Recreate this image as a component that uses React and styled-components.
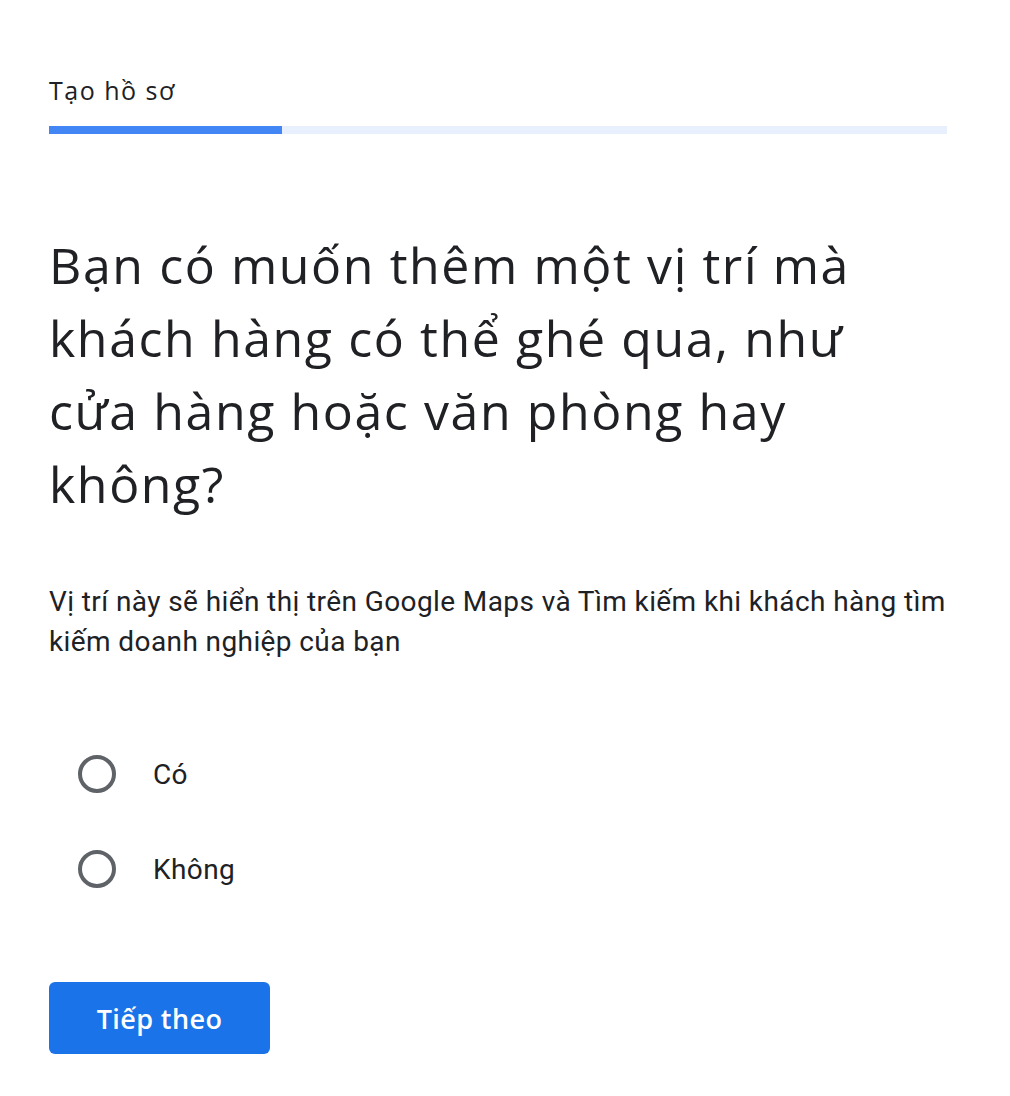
import React, { useState } from 'react';
import styled, { createGlobalStyle } from 'styled-components';

const GlobalStyle = createGlobalStyle`
  html, body {
    margin: 0;
    padding: 0;
    background: #fff;
  }
`;

const Page = styled.div`
  padding: 74px 63px 40px 49px;
  font-family: 'Open Sans', Roboto, sans-serif;
  color: #202124;
`;

const StepTitle = styled.div`
  font-size: 25px;
  line-height: 32px;
  font-weight: 500;
  letter-spacing: 1.5px;
`;

const Track = styled.div`
  margin-top: 20px;
  width: 898px;
  height: 8px;
  background: #e8f0fe;
  display: flex;
`;

const Fill = styled.div`
  height: 100%;
  background: #4285f4;
`;

const Heading = styled.h1`
  margin: 95px 0 0;
  max-width: 870px;
  font-size: 50px;
  line-height: 73px;
  font-weight: 400;
  letter-spacing: 1.6px;
`;

const Description = styled.p`
  margin: 61px 0 0;
  font-family: Roboto, 'Liberation Sans', sans-serif;
  font-size: 28px;
  line-height: 40px;
  letter-spacing: 0.4px;
`;

const Options = styled.div`
  margin-top: 76px;
  display: flex;
  flex-direction: column;
  gap: 23px;
`;

const Option = styled.label`
  display: flex;
  align-items: center;
  height: 72px;
  padding-left: 29px;
  gap: 37px;
  cursor: pointer;
  font-family: Roboto, 'Liberation Sans', sans-serif;
  font-size: 28px;
  letter-spacing: 0.4px;
`;

const Radio = styled.span`
  box-sizing: border-box;
  width: 38px;
  height: 38px;
  border-radius: 50%;
  border: 4px solid ${(p) => (p.checked ? '#1a73e8' : '#5f6368')};
  display: flex;
  align-items: center;
  justify-content: center;
  &::after {
    content: '';
    width: 18px;
    height: 18px;
    border-radius: 50%;
    background: #1a73e8;
    display: ${(p) => (p.checked ? 'block' : 'none')};
  }
`;

const NextButton = styled.button`
  margin-top: 77px;
  width: 221px;
  height: 72px;
  border: none;
  border-radius: 6px;
  background: #1a73e8;
  color: #fff;
  font-family: 'Open Sans', Roboto, sans-serif;
  font-size: 27px;
  font-weight: 600;
  letter-spacing: 0.4px;
  cursor: pointer;
`;

const choices = ['Có', 'Không'];

export default function App() {
  const [value, setValue] = useState(null);
  return (
    <Page>
      <GlobalStyle />
      <StepTitle>Tạo hồ sơ</StepTitle>
      <Track>
        <Fill style={{ width: `${(233 / 898) * 100}%` }} />
      </Track>
      <Heading>Bạn có muốn thêm một vị trí mà khách hàng có thể ghé qua, như cửa hàng hoặc văn phòng hay không?</Heading>
      <Description>
        Vị trí này sẽ hiển thị trên Google Maps và Tìm kiếm khi khách hàng tìm kiếm doanh nghiệp của bạn
      </Description>
      <Options>
        {choices.map((c) => (
          <Option key={c} onClick={() => setValue(c)}>
            <Radio checked={value === c} />
            {c}
          </Option>
        ))}
      </Options>
      <NextButton>Tiếp theo</NextButton>
    </Page>
  );
}
